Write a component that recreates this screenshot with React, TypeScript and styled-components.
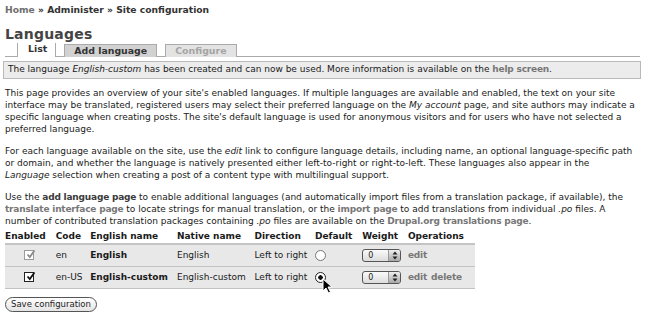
import styled, { createGlobalStyle } from "styled-components";

const GlobalStyle = createGlobalStyle`
  html, body {
    margin: 0;
    padding: 0;
    background: #fff;
  }
  body {
    font-family: "DejaVu Sans", Verdana, sans-serif;
    font-size: 9px;
    color: #1a1a1a;
  }
`;

const languages = [
  { code: "en", name: "English", native: "English", locked: true, isDefault: false, ops: ["edit"] },
  { code: "en-US", name: "English-custom", native: "English-custom", locked: false, isDefault: true, ops: ["edit", "delete"] },
];

const App = () => {
  return (
    <>
      <GlobalStyle />
      <Page>
        <Breadcrumb>
          <Crumb>Home</Crumb> » Administer » Site configuration
        </Breadcrumb>
        <Title>Languages</Title>
        <Tabs>
          <Tab $state="active">List</Tab>
          <Tab $state="normal">Add language</Tab>
          <Tab $state="disabled">Configure</Tab>
        </Tabs>
        <Message>
          The language <em>English-custom</em> has been created and can now be used. More
          information is available on the <Link $tone="light">help screen</Link>.
        </Message>
        <Paragraph>
          This page provides an overview of your site's enabled languages. If multiple languages
          are available and enabled, the text on your site interface may be translated, registered
          users may select their preferred language on the <em>My account</em> page, and site
          authors may indicate a specific language when creating posts. The site's default
          language is used for anonymous visitors and for users who have not selected a preferred
          language.
        </Paragraph>
        <Paragraph $inset={5}>
          For each language available on the site, use the <em>edit</em> link to configure language
          details, including name, an optional language-specific path or domain, and whether the
          language is natively presented either left-to-right or right-to-left. These languages
          also appear in the <em>Language</em> selection when creating a post of a content type
          with multilingual support.
        </Paragraph>
        <Paragraph>
          Use the <Link $tone="dark">add language page</Link> to enable additional languages (and
          automatically import files from a translation package, if available), the{" "}
          <Link $tone="light">translate interface page</Link> to locate strings for manual
          translation, or the <Link $tone="light">import page</Link> to add translations from
          individual <em>.po</em> files. A number of contributed translation packages containing{" "}
          <em>.po</em> files are available on the{" "}
          <Link $tone="light">Drupal.org translations page</Link>.
        </Paragraph>
        <Table>
          <thead>
            <tr>
              <Th>Enabled</Th>
              <Th>Code</Th>
              <Th>English name</Th>
              <Th>Native name</Th>
              <Th>Direction</Th>
              <Th>Default</Th>
              <Th>Weight</Th>
              <Th>Operations</Th>
            </tr>
          </thead>
          <tbody>
            {languages.map((lang) => (
              <Row key={lang.code}>
                <Td $center>
                  <Check $muted={lang.locked}>
                    <svg width="9" height="9" viewBox="0 0 9 9">
                      <path d="M1.5 4.5 L3.8 7 L8.5 0.5" fill="none" stroke="currentColor" strokeWidth="1.8" />
                    </svg>
                  </Check>
                </Td>
                <Td>{lang.code}</Td>
                <Td><b>{lang.name}</b></Td>
                <Td>{lang.native}</Td>
                <Td>Left to right</Td>
                <Td>
                  <Radio $on={lang.isDefault} />
                </Td>
                <Td>
                  <Select>
                    <SelectValue>0</SelectValue>
                    <SelectArrows>
                      <svg width="6" height="9" viewBox="0 0 6 9">
                        <path d="M3 0.5 L5.5 3.5 H0.5 Z M3 8.5 L5.5 5.5 H0.5 Z" fill="#222" />
                      </svg>
                    </SelectArrows>
                  </Select>
                </Td>
                <Td>
                  <Ops>
                    {lang.ops.map((op) => (
                      <Link key={op} $tone="light">{op}</Link>
                    ))}
                  </Ops>
                </Td>
              </Row>
            ))}
          </tbody>
        </Table>
        <Button>Save configuration</Button>
        <Cursor width="12" height="16" viewBox="0 0 12 16">
          <path d="M1 1 L1 13 L4 10 L6.5 15 L8.5 14 L6 9 L10 9 Z" fill="#000" stroke="#fff" strokeWidth="1" />
        </Cursor>
      </Page>
    </>
  );
};

export default App;

const Page = styled.div`
  position: relative;
  width: 650px;
  height: 318px;
  padding: 3px 11px 0 5px;
  box-sizing: border-box;
  overflow: hidden;
`;

const Breadcrumb = styled.div`
  font-weight: bold;
  font-size: 9.2px;
  color: #333;
  line-height: 13px;
`;

const Crumb = styled.span`
  color: #6e6e6e;
`;

const Title = styled.h2`
  margin: 10px 0 0;
  font-size: 14px;
  line-height: 16px;
  color: #444;
  letter-spacing: 0.2px;
`;

const Tabs = styled.div`
  display: flex;
  gap: 8px;
  margin: 1px -1px 0 0;
  padding-left: 12px;
  border-bottom: 1px solid #aaa;
  height: 13px;
  align-items: flex-end;
`;

const Tab = styled.div<{ $state: "active" | "normal" | "disabled" }>`
  height: 13px;
  box-sizing: border-box;
  font-weight: bold;
  font-size: 9.4px;
  line-height: 12px;
  margin-bottom: -1px;
  padding: 0 9px;
  border: 1px solid #aaa;
  border-bottom: none;
  color: ${(p) => (p.$state === "disabled" ? "#a5a5a5" : "#333")};
  background: ${(p) =>
    p.$state === "active" ? "#fff" : p.$state === "normal" ? "#d2d2d2" : "#e3e3e3"};
  ${(p) => p.$state === "active" && "border-top: none; height: 14px; padding: 0 8px 0 10px;"}
`;

const Message = styled.div`
  margin: 4px -2px 0 -2px;
  padding: 2px 4px 3px;
  background: #ececec;
  border: 1px solid #b9b9b9;
  line-height: 11px;
`;

const Link = styled.span<{ $tone: "light" | "dark" }>`
  font-weight: bold;
  letter-spacing: -0.2px;
  color: ${(p) => (p.$tone === "dark" ? "#3a3a3a" : "#777")};
`;

const Paragraph = styled.p<{ $inset?: number }>`
  margin: 10px 0 0;
  padding-right: ${(p) => p.$inset ?? 0}px;
  line-height: 12px;
  &:first-of-type {
    margin-top: 8px;
  }
`;

const Table = styled.table`
  margin-top: 4px;
  border-collapse: collapse;
  width: 470px;
`;

const Th = styled.th`
  text-align: left;
  font-weight: bold;
  padding: 0 7px 1px 0;
  line-height: 11px;
  border-bottom: 2px solid #c4c4c4;
  white-space: nowrap;
`;

const Row = styled.tr`
  background: #e8e8e8;
  border-bottom: 1px solid #c2c2c2;
  height: 22px;
`;

const Td = styled.td<{ $center?: boolean }>`
  padding: 0 4px 0 0;
  white-space: nowrap;
  text-align: ${(p) => (p.$center ? "center" : "left")};
  vertical-align: middle;
`;

const Check = styled.span<{ $muted: boolean }>`
  display: inline-flex;
  align-items: flex-end;
  justify-content: center;
  width: 8px;
  height: 8px;
  border: 1px solid ${(p) => (p.$muted ? "#9a9a9a" : "#222")};
  background: #fff;
  color: ${(p) => (p.$muted ? "#8a8a8a" : "#111")};
  margin-left: 2px;
  svg {
    margin: 0 -2px 0 0;
  }
`;

const Radio = styled.span<{ $on: boolean }>`
  display: inline-block;
  width: 9px;
  height: 9px;
  border-radius: 50%;
  border: 1px solid ${(p) => (p.$on ? "#222" : "#777")};
  background: ${(p) =>
    p.$on ? "radial-gradient(circle, #111 0 2px, #fff 2.5px)" : "#fff"};
  vertical-align: middle;
`;

const Select = styled.span`
  display: inline-flex;
  width: 39px;
  height: 13px;
  box-sizing: border-box;
  border: 1px solid #555;
  border-radius: 3px;
  background: linear-gradient(#fafafa, #dcdcdc);
  overflow: hidden;
  vertical-align: middle;
`;

const SelectValue = styled.span`
  flex: 1;
  padding-left: 5px;
  font-size: 8px;
  line-height: 11px;
`;

const SelectArrows = styled.span`
  width: 11px;
  display: flex;
  align-items: center;
  justify-content: center;
  background: linear-gradient(#eee, #a8a8a8);
  border-left: 1px solid #999;
`;

const Ops = styled.span`
  display: inline-flex;
  gap: 4px;
`;

const Button = styled.button`
  margin-top: 8px;
  font-family: "DejaVu Sans", Verdana, sans-serif;
  font-size: 8.5px;
  color: #222;
  padding: 1px 5px;
  border: 1px solid #555;
  border-radius: 8px;
  background: linear-gradient(#fff, #e4e4e4);
  line-height: 11px;
`;

const Cursor = styled.svg`
  position: absolute;
  left: 322px;
  top: 278px;
`;
